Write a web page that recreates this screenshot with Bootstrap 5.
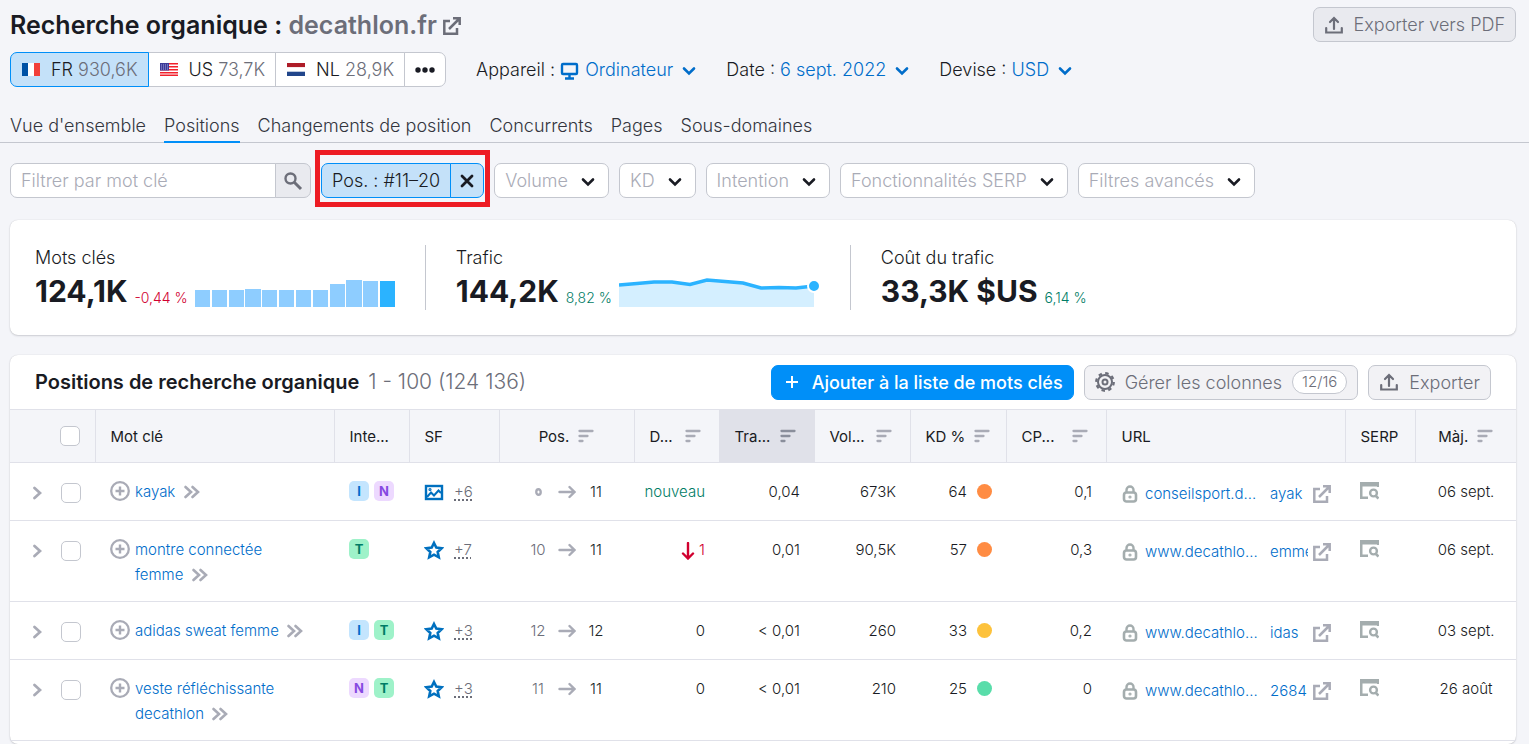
<!DOCTYPE html>
<html lang="fr">
<head>
<meta charset="utf-8">
<meta name="viewport" content="width=device-width, initial-scale=1">
<title>Recherche organique : decathlon.fr</title>
<link href="https://cdn.jsdelivr.net/npm/bootstrap@5.3.0/dist/css/bootstrap.min.css" rel="stylesheet">
<style>
:root{--ink:#191b23;--muted:#6c6e79;--soft:#a9abb6;--line:#c4c7cf;--hair:#e0e1e9;--blue:#006dca;--accent:#008ff8;--page:#f4f5f9}
body{font-family:Inter,"Liberation Sans",sans-serif;font-size:18px;line-height:25px;font-weight:300;color:var(--ink);background:var(--page);min-height:100vh}
a{color:var(--blue);text-decoration:none}
svg{flex:none;fill:none;stroke:currentColor;stroke-width:2}
.page-wrap{padding:7px 13px 0 10px}
.page-title{font-size:25px;line-height:37px;font-weight:600;gap:6px}
.page-title a,.dim{color:var(--muted)}
.ctl{height:35px;padding:0 10px;border:1px solid var(--line);border-radius:7px;background:#fff;font-size:18px;line-height:25px;font-weight:300;color:var(--soft);display:inline-flex;align-items:center;white-space:nowrap;gap:10px}
.ctl svg{color:var(--ink)}
.ctl-grey{background:#e9eaef;color:var(--muted);font-weight:350}
.ctl-grey svg{color:var(--muted)}
.ctl-light{background:#f2f2f5}
.ctl-blue{background:var(--accent);border-color:var(--accent);color:#fff;font-weight:500}
.ctl-blue svg{color:#fff}
.seg .ctl{border-radius:0;color:var(--ink);margin-left:-1px}
.seg .ctl:first-child{border-radius:7px 0 0 7px;margin-left:0}
.seg .ctl:last-child{border-radius:0 7px 7px 0}
.seg .ctl.on,.pill .ctl{background:#c4e1f9;border-color:var(--accent);color:var(--ink);z-index:1}
.settings{margin-left:30px;gap:30px}
.page-tabs{border-bottom:1px solid var(--line);gap:18px;padding:0 10px;margin-top:14px}
.page-tabs a{color:#33353e;padding:12px 0 3px;border-bottom:2px solid transparent;margin-bottom:-1px}
.page-tabs a.active{border-color:var(--accent)}
.filters,.actions{gap:10px}
.filters .drop-btn svg{margin-top:3px}
.search-box{width:301px}
.search-box input{min-width:0;border-radius:7px 0 0 7px;color:var(--ink)}
.search-box input::placeholder{color:var(--soft);opacity:1}
.search-box .ctl-grey{border-radius:0 7px 7px 0;margin-left:-1px;padding:0 7px}
.pill{position:relative}
.pill .ctl:first-child{border-radius:7px 0 0 7px}
.pill .ctl:nth-child(2){border-radius:0 7px 7px 0;margin-left:-1px;padding:0 8px}
.pill .frame{position:absolute;inset:-13px -6px -9px;border:5px solid #ed1c24;pointer-events:none;z-index:2}
.panel{background:#fff;border-radius:8px;box-shadow:0 1px 2px rgba(25,27,35,.16),0 0 1px rgba(25,27,35,.2)}
.metrics{padding:25px;margin-top:22px}
.metric{padding-right:30px;margin-right:30px;border-right:1px solid var(--line);height:65px}
.metric:last-child{border:0}
.metric-row{display:flex;align-items:flex-end;gap:7px}
.metric b{font-size:30px;line-height:42px;font-weight:700}
.metric .rate{font-size:14px;line-height:20px;margin-bottom:4px}
.metric svg{margin-bottom:5px}
.neg{color:#d1002f}.pos{color:#007c65}
.positions{margin-top:20px}
.panel-head{height:54px;padding:0 25px}
.panel-title{font-size:20px;line-height:30px;font-weight:600}
.panel-title .dim{font-size:21px;font-weight:350}
.count-pill{border:1px solid var(--line);border-radius:12px;background:#fff;font-size:15px;line-height:22px;padding:0 9px}
.grid{table-layout:fixed;width:100%;font-size:15px;line-height:25px}
.grid th{height:53px;background:var(--page);border:1px solid var(--hair);border-width:1px 1px 1px 0;font-weight:400;padding:0 15px;vertical-align:middle;white-space:nowrap}
.grid th:last-child{border-right:0}
.grid th.sorted{background:var(--hair)}
.grid th.sortable{padding-right:18px}
.grid td{height:58px;border-bottom:1px solid var(--hair);padding:16px 14px 14px 15px;vertical-align:top}
.grid td.text-end{padding-left:5px}
.grid svg{color:var(--soft)}
.grid .form-check-input{width:20px;height:20px;margin:0;border-color:var(--line);border-radius:5px;background-color:#fff}
.tick{display:flex;align-items:center;justify-content:flex-end;gap:19px}
.sort-btn{color:inherit;display:flex;align-items:center;justify-content:space-between;gap:9px}
.grid .sorted svg{color:#8a8e9b}
.bare{border:0;background:none;padding:0;color:inherit;font:inherit;line-height:inherit}
.kw{gap:5px}
.kw>svg,.tags{margin-top:2px}
.kw a svg{margin-bottom:1px}
.tags{gap:5px}
.tag{display:inline-block;width:20px;height:20px;border-radius:5px;font-size:13px;line-height:20px;font-weight:700;text-align:center}
.tag-i{background:#c4e5fe;color:#006dca}.tag-n{background:#edd9ff;color:#8649e1}.tag-t{background:#9ef2c9;color:#007c65}
.feats{gap:10px;align-items:center}
.grid .feat{color:#0070bf}
.more{color:var(--muted);text-decoration:underline dotted 2px;text-underline-offset:2px}
.step{display:flex;justify-content:center}
.step span{width:29px;display:flex;align-items:center;justify-content:center}
.kd{gap:10px}
.dot{width:15px;height:15px;border-radius:50%}
.hard{background:#ff8c43}.mid{background:#fdc23c}.easy{background:#59ddaa}
.link-cell{display:flex;align-items:center;padding-top:2px;white-space:nowrap}
.link-cell svg{display:block}
.lk{margin-right:6px}
.host{flex:1 1 0;min-width:0;overflow:hidden}
.tail{width:38px;margin-right:5px;overflow:hidden}
.serp{display:flex;padding-top:3px}
.grid .grey-green svg{color:#a4adae}
.grid .drop{color:#d1002f}
</style>
</head>
<body class="d-flex flex-column">
<svg class="d-none" aria-hidden="true">
  <symbol id="down" viewBox="0 0 14 10"><path d="M2 2.500 7 7.500 12 2.500" stroke-width="2.600" stroke-linecap="round"/></symbol>
  <symbol id="ext" viewBox="0 0 18 18"><path d="M7 4H1.300V16.700H14V11M6 12 15.500 2.500M10 1.300H16.700V8" stroke-width="2.500"/></symbol>
  <symbol id="up" viewBox="0 0 18 18"><path d="M1.200 12V16.500H16.800V12M9 13V2.500M5 6 9 2 13 6" stroke-width="2.200" stroke-linecap="round"/></symbol>
  <symbol id="sort" viewBox="0 0 16 14"><path d="M1.500 2H14.500M1.500 7H9.500M1.500 12H4.500" stroke-width="2.300" stroke-linecap="round"/></symbol>
  <symbol id="go" viewBox="0 0 9 14"><path d="M1.500 2 7 7 1.500 12" stroke-width="2.700" stroke-linecap="round"/></symbol>
  <symbol id="dbl" viewBox="0 0 16 14"><path d="M1.500 2 7 7 1.500 12M8.500 2 14 7 8.500 12" stroke-width="2.600" stroke-linecap="round"/></symbol>
  <symbol id="plus" viewBox="0 0 20 20"><circle cx="10" cy="10" r="8.800" stroke-width="2.300"/><path d="M10 5.500V14.500M5.500 10H14.500" stroke-width="2.400"/></symbol>
  <symbol id="arrow" viewBox="0 0 18 14"><path d="M1.500 7H16M11.500 2 16.500 7 11.500 12" stroke-width="2.400" stroke-linecap="round"/></symbol>
  <symbol id="star" viewBox="0 0 20 20"><path d="M10 3 12.300 7.600 17.700 8.200 13.700 12 14.800 17.300 10 14.700 5.200 17.300 6.300 12 2.300 8.200 7.700 7.600Z" stroke-width="2.600"/></symbol>
  <symbol id="lock" viewBox="0 0 18 18"><rect x="3" y="7.500" width="12" height="9" rx="2.500" stroke-width="2.600"/><path d="M5.500 7.500V5A3.500 3.500 0 0 1 12.500 5V7.500" stroke-width="2.400"/><circle cx="9" cy="12" r=".6"/></symbol>
  <symbol id="serp" viewBox="0 0 19 18"><path d="M0 0H19V5H17V4.500H2.500V14.500H8V17H0Z" fill="currentColor" stroke="none"/><circle cx="13.500" cy="11" r="3.400" stroke-width="2.400"/><path d="M16 14 18.500 16.500" stroke-width="2.600"/></symbol>
</svg>

<header class="page-wrap">
  <div class="d-flex justify-content-between align-items-start">
    <h1 class="page-title mb-0 d-flex align-items-center"><span>Recherche organique : <a href="#">decathlon.fr</a></span><a href="#" class="d-flex" aria-label="Ouvrir le site"><svg width="18" height="18"><use href="#ext"/></svg></a></h1>
    <button type="button" class="ctl ctl-grey"><svg width="20" height="18"><use href="#up"/></svg>Exporter vers PDF</button>
  </div>
  <div class="d-flex align-items-center mt-2">
    <div class="seg d-flex" role="group" aria-label="Pays">
      <button type="button" class="ctl on"><svg width="20" height="13" stroke="none"><path fill="#0052a5" stroke="none" d="M1 0h6v13H1z"/><path fill="#fff" stroke="none" d="M7 0h6v13H7z"/><path fill="#f2403a" stroke="none" d="M13 0h6v13h-6z"/></svg><span>FR <span class="dim">930,6K</span></span></button>
      <button type="button" class="ctl"><svg width="20" height="13"><g stroke="none"><path fill="#fff" d="M1 0h18v13H1z"/><path fill="#f2202c" d="M1 0h18v1.500H1zM1 3h18v1.500H1zM1 6h18v1.500H1zM1 9h18v1.500H1zM1 11.500h18V13H1z"/><path fill="#3c3b98" d="M1 0h9v7.500H1z"/></g><path d="M2 2h7M2 4h7M2 6h7" stroke="#a9a8dc" stroke-width="1" stroke-dasharray="1 1"/></svg><span>US <span class="dim">73,7K</span></span></button>
      <button type="button" class="ctl"><svg width="20" height="13"><g stroke="none"><path fill="#ae1c28" d="M1 0h18v4.300H1z"/><path fill="#fff" d="M1 4.300h18v4.400H1z"/><path fill="#21468b" d="M1 8.700h18V13H1z"/></g></svg><span>NL <span class="dim">28,9K</span></span></button>
      <button type="button" class="ctl" aria-label="Autres pays"><svg width="20" height="6"><g fill="currentColor" stroke="none"><circle cx="3" cy="3" r="2.700"/><circle cx="10" cy="3" r="2.700"/><circle cx="17" cy="3" r="2.700"/></g></svg></button>
    </div>
    <div class="settings d-flex">
      <div>Appareil : <a href="#"><svg width="20" height="18"><rect x="2" y="2" width="15" height="10" rx="1" stroke-width="2.400"/><path d="M9.500 12V16M5 16.500H14" stroke-width="2.400"/></svg> Ordinateur <svg class="ms-1" width="14" height="10"><use href="#down"/></svg></a></div>
      <div>Date : <a href="#">6 sept. 2022 <svg class="ms-1" width="14" height="10"><use href="#down"/></svg></a></div>
      <div>Devise : <a href="#">USD <svg class="ms-1" width="14" height="10"><use href="#down"/></svg></a></div>
    </div>
  </div>
</header>
<nav class="page-tabs d-flex" aria-label="Rapports">
  <a href="#">Vue d'ensemble</a><a href="#" class="active">Positions</a><a href="#">Changements de position</a><a href="#">Concurrents</a><a href="#">Pages</a><a href="#">Sous-domaines</a>
</nav>

<main class="page-wrap flex-grow-1 d-flex flex-column pt-0">
  <form class="filters d-flex mt-3 pt-1">
    <div class="search-box d-flex"><input type="text" class="ctl flex-grow-1" placeholder="Filtrer par mot clé" aria-label="Filtrer par mot clé"><button type="button" class="ctl ctl-grey" aria-label="Rechercher"><svg width="20" height="20"><circle cx="7.500" cy="7.500" r="5" stroke-width="2.400"/><path d="M11.500 11.500 18 18" stroke-width="3"/></svg></button></div>
    <div class="pill d-flex"><button type="button" class="ctl">Pos. : #11–20</button><button type="button" class="ctl" aria-label="Effacer"><svg width="16" height="16"><path d="M3 3 13 13M13 3 3 13" stroke-width="2.800" stroke-linecap="round"/></svg></button><span class="frame"></span></div>
    <button type="button" class="ctl drop-btn">Volume<svg width="20" height="10"><use href="#down"/></svg></button>
    <button type="button" class="ctl drop-btn">KD<svg width="20" height="10"><use href="#down"/></svg></button>
    <button type="button" class="ctl drop-btn">Intention<svg width="20" height="10"><use href="#down"/></svg></button>
    <button type="button" class="ctl drop-btn">Fonctionnalités SERP<svg width="20" height="10"><use href="#down"/></svg></button>
    <button type="button" class="ctl drop-btn">Filtres avancés<svg width="20" height="10"><use href="#down"/></svg></button>
  </form>

  <section class="panel metrics d-flex">
    <div class="metric">
      <div>Mots clés</div>
      <div class="metric-row"><b>124,1K</b><span class="rate neg">-0,44 %</span>
        <svg width="200" height="27"><g stroke="none"><path fill="#8ecdff" d="M0 10h15v17H0zM17 10h15v17H17zM34 10h15v17H34zM50 9h16v18H50zM67 10h15v17H67zM84 10h15v17H84zM101 10h15v17h-15zM118 10h15v17h-15zM135 4h15v23h-15zM151 0h16v27h-16zM168 1h15v26h-15z"/><path fill="#2bb3ff" d="M185 1h15v26h-15z"/></g></svg></div>
    </div>
    <div class="metric">
      <div>Trafic</div>
      <div class="metric-row"><b>144,2K</b><span class="rate pos">8,82 %</span>
        <svg width="201" height="30"><path d="M0 8 18 6 35 5H53L71 8 88 3 106 4 124 6 142 11 160 10 177 11 195 9V30H0Z" fill="#d4efff" stroke="none"/><path d="M0 8 18 6.500 35 5H53L71 7.500 88 3 106 4.500 124 6 142 11 160 10.500 177 11 195 9" stroke="#2bb3ff" stroke-width="3.500"/><circle cx="195" cy="9" r="6" fill="#2bb3ff" stroke="#fff"/></svg></div>
    </div>
    <div class="metric">
      <div>Coût du trafic</div>
      <div class="metric-row"><b>33,3K $US</b><span class="rate pos">6,14 %</span></div>
    </div>
  </section>

  <section class="panel positions flex-grow-1">
    <div class="panel-head d-flex justify-content-between align-items-center">
      <h2 class="panel-title mb-0">Positions de recherche organique <span class="dim ms-1">1 - 100 (124 136)</span></h2>
      <div class="actions d-flex">
        <button type="button" class="ctl ctl-blue"><svg width="20" height="20"><path d="M10 4V16M4 10H16"/></svg>Ajouter à la liste de mots clés</button>
        <button type="button" class="ctl ctl-grey ctl-light"><svg width="20" height="20"><circle cx="10" cy="10" r="7"/><circle cx="10" cy="10" r="2.500"/><circle cx="10" cy="10" r="8.800" stroke-width="2.200" stroke-dasharray="3.450 3.450"/></svg>Gérer les colonnes<span class="count-pill">12/16</span></button>
        <button type="button" class="ctl ctl-grey ctl-light"><svg width="20" height="18"><use href="#up"/></svg>Exporter</button>
      </div>
    </div>
    <table class="grid">
      <colgroup><col style="width:85px"><col><col style="width:75px"><col style="width:90px"><col style="width:135px"><col style="width:85px"><col style="width:95px"><col style="width:96px"><col style="width:96px"><col style="width:100px"><col style="width:239px"><col style="width:70px"><col style="width:101px"></colgroup>
      <thead><tr>
        <th><div class="tick"><input class="form-check-input" type="checkbox" aria-label="Tout sélectionner"></div></th>
        <th>Mot clé</th><th>Inte...</th><th>SF</th>
        <th><button class="bare sort-btn mx-auto">Pos. <svg width="16" height="14"><use href="#sort"/></svg></button></th>
        <th class="sortable"><button class="bare sort-btn w-100">D... <svg width="16" height="14"><use href="#sort"/></svg></button></th>
        <th class="sortable sorted"><button class="bare sort-btn w-100">Tra... <svg width="16" height="14"><use href="#sort"/></svg></button></th>
        <th class="sortable"><button class="bare sort-btn w-100">Vol... <svg width="16" height="14"><use href="#sort"/></svg></button></th>
        <th class="sortable"><button class="bare sort-btn w-100">KD % <svg width="16" height="14"><use href="#sort"/></svg></button></th>
        <th class="sortable"><button class="bare sort-btn w-100">CP... <svg width="16" height="14"><use href="#sort"/></svg></button></th>
        <th>URL</th><th>SERP</th>
        <th><button class="bare sort-btn mx-auto">Màj. <svg width="16" height="14"><use href="#sort"/></svg></button></th>
      </tr></thead>
      <tbody>
      <tr>
        <td><div class="tick pt-1"><button class="bare d-flex" aria-label="Développer"><svg width="9" height="14"><use href="#go"/></svg></button><input class="form-check-input" type="checkbox" aria-label="kayak"></div></td>
        <td><div class="d-flex kw"><svg width="20" height="20"><use href="#plus"/></svg><a href="#">kayak <svg class="ms-1" width="16" height="14"><use href="#dbl"/></svg></a></div></td>
        <td><div class="d-flex tags"><span class="tag tag-i">I</span><span class="tag tag-n">N</span></div></td>
        <td><div class="d-flex feats"><svg class="feat" width="20" height="20"><rect x="2" y="4" width="16" height="13" stroke-width="2.400"/><path d="M3 15 7 10.500 10 13.500 14.500 8.500 17 11"/><circle cx="6" cy="7.500" r=".6"/></svg><span class="more">+6</span></div></td>
        <td><div class="step dim"><span><svg width="9" height="10"><ellipse cx="4.500" cy="5" rx="2.200" ry="2.700" stroke-width="2.400"/></svg></span><span><svg width="18" height="14"><use href="#arrow"/></svg></span><span class="text-body">11</span></div></td>
        <td class="text-end pos">nouveau</td><td class="text-end">0,04</td><td class="text-end">673K</td>
        <td><div class="d-flex justify-content-end align-items-center kd">64<span class="dot hard"></span></div></td><td class="text-end">0,1</td>
        <td><div class="link-cell"><span class="grey-green lk"><svg width="18" height="18"><use href="#lock"/></svg></span><a href="#" class="host">conseilsport.d...</a><a href="#" class="tail">ayak</a><a href="#" class="out" aria-label="Ouvrir"><svg width="18" height="18"><use href="#ext"/></svg></a></div></td>
        <td><a href="#" class="grey-green serp" aria-label="Voir la SERP"><svg width="19" height="18"><use href="#serp"/></svg></a></td><td class="text-center">06 sept.</td>
      </tr>
      <tr>
        <td><div class="tick pt-1"><button class="bare d-flex" aria-label="Développer"><svg width="9" height="14"><use href="#go"/></svg></button><input class="form-check-input" type="checkbox" aria-label="montre connectée femme"></div></td>
        <td><div class="d-flex kw"><svg width="20" height="20"><use href="#plus"/></svg><a href="#">montre connectée<br>femme <svg class="ms-1" width="16" height="14"><use href="#dbl"/></svg></a></div></td>
        <td><div class="d-flex tags"><span class="tag tag-t">T</span></div></td>
        <td><div class="d-flex feats"><svg class="feat" width="20" height="20"><use href="#star"/></svg><span class="more">+7</span></div></td>
        <td><div class="step dim"><span>10</span><span><svg width="18" height="14"><use href="#arrow"/></svg></span><span class="text-body">11</span></div></td>
        <td class="text-end neg"><svg class="drop" width="14" height="18"><path d="M7 1V16M2 11.500 7 16.500 12 11.500" stroke-width="2.400" stroke-linecap="round"/></svg> 1</td><td class="text-end">0,01</td><td class="text-end">90,5K</td>
        <td><div class="d-flex justify-content-end align-items-center kd">57<span class="dot hard"></span></div></td><td class="text-end">0,3</td>
        <td><div class="link-cell"><span class="grey-green lk"><svg width="18" height="18"><use href="#lock"/></svg></span><a href="#" class="host">www.decathlo...</a><a href="#" class="tail">emme</a><a href="#" class="out" aria-label="Ouvrir"><svg width="18" height="18"><use href="#ext"/></svg></a></div></td>
        <td><a href="#" class="grey-green serp" aria-label="Voir la SERP"><svg width="19" height="18"><use href="#serp"/></svg></a></td><td class="text-center">06 sept.</td>
      </tr>
      <tr>
        <td><div class="tick pt-1"><button class="bare d-flex" aria-label="Développer"><svg width="9" height="14"><use href="#go"/></svg></button><input class="form-check-input" type="checkbox" aria-label="adidas sweat femme"></div></td>
        <td><div class="d-flex kw"><svg width="20" height="20"><use href="#plus"/></svg><a href="#">adidas sweat femme <svg class="ms-1" width="16" height="14"><use href="#dbl"/></svg></a></div></td>
        <td><div class="d-flex tags"><span class="tag tag-i">I</span><span class="tag tag-t">T</span></div></td>
        <td><div class="d-flex feats"><svg class="feat" width="20" height="20"><use href="#star"/></svg><span class="more">+3</span></div></td>
        <td><div class="step dim"><span>12</span><span><svg width="18" height="14"><use href="#arrow"/></svg></span><span class="text-body">12</span></div></td>
        <td class="text-end">0</td><td class="text-end">&lt; 0,01</td><td class="text-end">260</td>
        <td><div class="d-flex justify-content-end align-items-center kd">33<span class="dot mid"></span></div></td><td class="text-end">0,2</td>
        <td><div class="link-cell"><span class="grey-green lk"><svg width="18" height="18"><use href="#lock"/></svg></span><a href="#" class="host">www.decathlo...</a><a href="#" class="tail">idas</a><a href="#" class="out" aria-label="Ouvrir"><svg width="18" height="18"><use href="#ext"/></svg></a></div></td>
        <td><a href="#" class="grey-green serp" aria-label="Voir la SERP"><svg width="19" height="18"><use href="#serp"/></svg></a></td><td class="text-center">03 sept.</td>
      </tr>
      <tr>
        <td><div class="tick pt-1"><button class="bare d-flex" aria-label="Développer"><svg width="9" height="14"><use href="#go"/></svg></button><input class="form-check-input" type="checkbox" aria-label="veste réfléchissante decathlon"></div></td>
        <td><div class="d-flex kw"><svg width="20" height="20"><use href="#plus"/></svg><a href="#">veste réfléchissante<br>decathlon <svg class="ms-1" width="16" height="14"><use href="#dbl"/></svg></a></div></td>
        <td><div class="d-flex tags"><span class="tag tag-n">N</span><span class="tag tag-t">T</span></div></td>
        <td><div class="d-flex feats"><svg class="feat" width="20" height="20"><use href="#star"/></svg><span class="more">+3</span></div></td>
        <td><div class="step dim"><span>11</span><span><svg width="18" height="14"><use href="#arrow"/></svg></span><span class="text-body">11</span></div></td>
        <td class="text-end">0</td><td class="text-end">&lt; 0,01</td><td class="text-end">210</td>
        <td><div class="d-flex justify-content-end align-items-center kd">25<span class="dot easy"></span></div></td><td class="text-end">0</td>
        <td><div class="link-cell"><span class="grey-green lk"><svg width="18" height="18"><use href="#lock"/></svg></span><a href="#" class="host">www.decathlo...</a><a href="#" class="tail">2684</a><a href="#" class="out" aria-label="Ouvrir"><svg width="18" height="18"><use href="#ext"/></svg></a></div></td>
        <td><a href="#" class="grey-green serp" aria-label="Voir la SERP"><svg width="19" height="18"><use href="#serp"/></svg></a></td><td class="text-center">26 août</td>
      </tr>
      </tbody>
    </table>
  </section>
</main>
<script src="https://cdn.jsdelivr.net/npm/bootstrap@5.3.0/dist/js/bootstrap.bundle.min.js"></script>
</body>
</html>
